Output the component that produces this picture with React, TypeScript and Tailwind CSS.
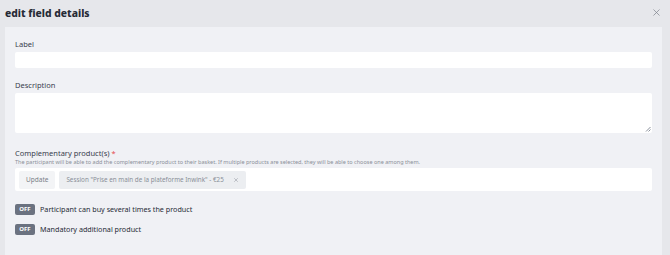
import React from 'react';
import { X } from 'lucide-react';

const font = { fontFamily: '"Noto Sans", "Open Sans", sans-serif' };

const Toggle = ({ label }: { label: string }) => (
  <div className="flex items-center gap-[5px] h-[11px]">
    <span className="w-[20px] h-[11px] rounded-[2px] bg-[#6b7280] text-white text-[6px] font-bold flex items-center justify-center">
      OFF
    </span>
    <span className="text-[7.2px] text-[#262b36] leading-none">{label}</span>
  </div>
);

export default function App() {
  return (
    <div className="w-[670px] h-[255px] bg-[#e6e7eb] overflow-hidden" style={font}>
      {/* Header */}
      <div className="h-[27px] flex items-center justify-between pl-[5px] pr-[8px]">
        <h1 className="text-[10.3px] font-extrabold text-[#262b36]">edit field details</h1>
        <X className="w-[11px] h-[11px] text-[#7a7f88] -mt-[2px]" strokeWidth={1.5} />
      </div>

      {/* Panel */}
      <div className="ml-[5px] w-[657px] h-[240px] bg-[#f0f1f5] pt-[12px] pl-[10px] pr-[10px]">
        <div className="text-[7.5px] text-[#39404d] leading-[10px]">Label</div>
        <div className="mt-[3px] h-[16px] bg-white rounded-[2px]" />

        <div className="mt-[12px] text-[7.5px] text-[#39404d] leading-[10px]">Description</div>
        <div className="relative mt-[3px] h-[40px] bg-white rounded-[2px]">
          <svg className="absolute right-[1px] bottom-[1px]" width="6" height="6" viewBox="0 0 6 6">
            <path d="M5.5 1 L1 5.5 M5.5 3.5 L3.5 5.5" stroke="#6b7280" strokeWidth="0.8" />
          </svg>
        </div>

        <div className="mt-[15px] text-[7.5px] text-[#39404d] leading-[10px]">
          Complementary product(s) <span className="text-[#e5484d]">*</span>
        </div>
        <div className="text-[5.5px] text-[#8a8f98] leading-[8px]">
          The participant will be able to add the complementary product to their basket. If multiple products are selected, they will be able to choose one among them.
        </div>
        <div className="mt-[2px] h-[23px] bg-white rounded-[2px] flex items-center gap-[4px] px-[4px]">
          <span className="h-[18px] px-[7px] rounded-[2px] bg-[#f3f4f6] text-[6.5px] text-[#7a7f88] flex items-center">Update</span>
          <span className="h-[18px] px-[7px] rounded-[2px] bg-[#eceef1] text-[6.3px] text-[#8a8f98] flex items-center gap-[9px]">
            Session "Prise en main de la plateforme Inwink" - €25
            <X className="w-[6px] h-[6px] text-[#8a8f98]" strokeWidth={2} />
          </span>
        </div>

        <div className="mt-[13px] flex flex-col gap-[9px]">
          <Toggle label="Participant can buy several times the product" />
          <Toggle label="Mandatory additional product" />
        </div>
      </div>
    </div>
  );
}
